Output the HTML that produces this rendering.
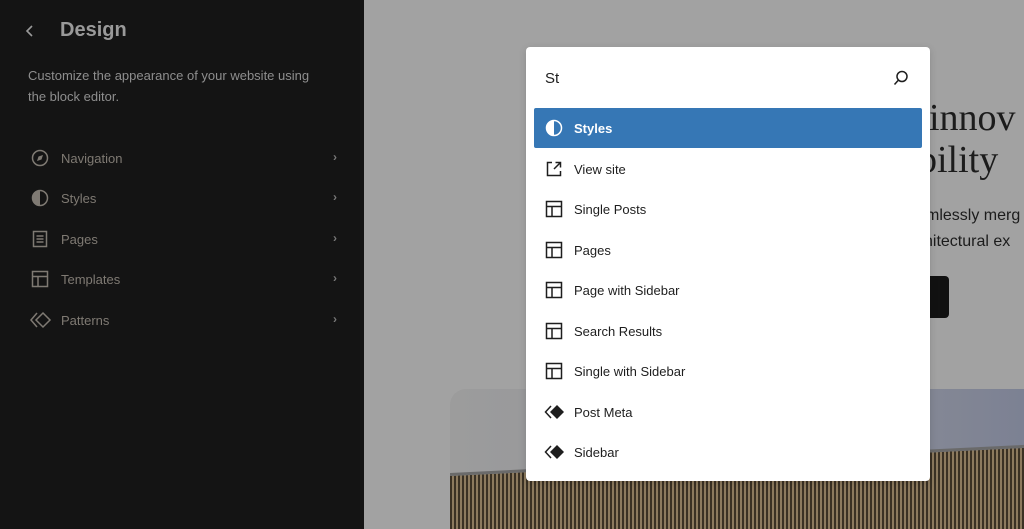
<!DOCTYPE html>
<html><head><meta charset="utf-8"><style>
*{margin:0;padding:0;box-sizing:border-box}
html,body{width:1024px;height:529px;overflow:hidden}
body{background:#a2a2a2;font-family:"Liberation Sans",sans-serif;position:relative}
#side{position:absolute;left:0;top:0;width:364px;height:529px;background:#141414;color:#8a8a8a}
.t{position:absolute;font-size:20px;font-weight:bold;color:#9a9a9a;left:60px;top:19px}
.desc{position:absolute;left:28px;top:66px;font-size:13px;line-height:20.5px;color:#8e8e8e;width:302px}
.nav{position:absolute;left:30px;width:310px;height:24px;font-size:13px;color:#7f7a73}
.nav svg{position:absolute;left:0;top:2px}
.nav span{position:absolute;left:31px;top:5px}
.nav .ch{position:absolute;right:3px;top:4px;font-size:12px;color:#777}
.bg{position:absolute;font-family:"Liberation Serif",serif;color:#1c1c1c;white-space:nowrap}
#modal{position:absolute;left:526px;top:47px;width:404px;height:434px;background:#fff;border-radius:4px;box-shadow:0 2px 8px rgba(0,0,0,.15);z-index:2}
.row{position:absolute;left:8px;width:388px;height:40px;font-size:13px;color:#1e1e1e}
.row svg{position:absolute;left:10px;top:10px}
.row span{position:absolute;left:40px;top:13px}
.sel{background:#3677b5;color:#fff;border-radius:2px;font-weight:bold}
</style></head><body>
<div id="side">
<svg style="position:absolute;left:24px;top:23px" width="12" height="16" viewBox="0 0 12 16"><path d="M8 3 L3 8 L8 13" stroke="#9a9a9a" stroke-width="1.6" fill="none"/></svg>
<div class="t">Design</div>
<div class="desc">Customize the appearance of your website using the block editor.</div>
<div class="nav" style="top:146px"><svg width="20" height="20" viewBox="0 0 20 20"><circle cx="10" cy="10" r="7.5" stroke="#7f7a73" stroke-width="1.5" fill="none"/><path d="M7 13 L8.5 8.5 L13 7 L11.5 11.5Z" fill="#7f7a73"/></svg><span>Navigation</span><b class="ch">›</b></div>
<div class="nav" style="top:186px"><svg width="20" height="20" viewBox="0 0 20 20"><circle cx="10" cy="10" r="7.5" stroke="#7f7a73" stroke-width="1.5" fill="none"/><path d="M10 2.5 A7.5 7.5 0 0 0 10 17.5Z" fill="#7f7a73"/></svg><span>Styles</span><b class="ch">›</b></div>
<div class="nav" style="top:227px"><svg width="20" height="20" viewBox="0 0 20 20"><rect x="3.5" y="2.5" width="13" height="15" stroke="#7f7a73" stroke-width="1.5" fill="none"/><path d="M6.5 7h7M6.5 10h7M6.5 13h7" stroke="#7f7a73" stroke-width="1.4"/></svg><span>Pages</span><b class="ch">›</b></div>
<div class="nav" style="top:267px"><svg width="20" height="20" viewBox="0 0 20 20"><rect x="2.5" y="2.5" width="15" height="15" stroke="#7f7a73" stroke-width="1.5" fill="none"/><path d="M2.5 7.5h15M8 7.5v10" stroke="#7f7a73" stroke-width="1.5"/></svg><span>Templates</span><b class="ch">›</b></div>
<div class="nav" style="top:308px"><svg width="22" height="20" viewBox="0 0 22 20"><path d="M7 3 L1 10 L7 17" stroke="#7f7a73" stroke-width="1.5" fill="none"/><path d="M13 3 L20 10 L13 17 L6 10Z" stroke="#7f7a73" stroke-width="1.5" fill="none"/></svg><span>Patterns</span><b class="ch">›</b></div>
</div>

<div class="bg" style="left:929px;top:96px;font-size:38px">innov</div>
<div class="bg" style="left:918px;top:138px;font-size:38px">bility</div>
<div class="bg" style="left:926px;top:207px;font-size:16px;font-family:'Liberation Sans',sans-serif">mlessly merg</div>
<div class="bg" style="left:924px;top:233px;font-size:16px;font-family:'Liberation Sans',sans-serif">hitectural ex</div>
<div style="position:absolute;left:880px;top:276px;width:69px;height:42px;background:#111;border-radius:4px"></div>
<div style="position:absolute;left:450px;top:389px;width:574px;height:140px;border-top-left-radius:16px;overflow:hidden;background:linear-gradient(90deg,#9c9c9c,#8f9198 60%,#7c8193)">
<div style="position:absolute;left:0;top:84px;width:574px;height:90px;transform:skewY(-2.8deg);transform-origin:0 0;background:repeating-linear-gradient(90deg,#3a3124 0 2px,#8c7a5e 2px 4px);border-top:3px solid #6a6a6a"></div>
</div>

<div id="modal">
<div style="position:absolute;left:19px;top:23px;font-size:15px;color:#1e1e1e">St</div>
<svg style="position:absolute;left:366px;top:22px" width="18" height="18" viewBox="0 0 18 18"><circle cx="10" cy="7.5" r="5" stroke="#1e1e1e" stroke-width="1.5" fill="none"/><path d="M6.5 11 L2.5 15.5" stroke="#1e1e1e" stroke-width="1.5"/></svg>
<div class="row sel" style="top:61px"><svg width="20" height="20" viewBox="0 0 20 20"><circle cx="10" cy="10" r="7.5" stroke="#fff" stroke-width="1.5" fill="none"/><path d="M10 2.5 A7.5 7.5 0 0 0 10 17.5Z" fill="#fff"/></svg><span>Styles</span></div>
<div class="row" style="top:102px"><svg width="20" height="20" viewBox="0 0 20 20"><path d="M8 3.5H3.5v13h13V12" stroke="#1e1e1e" stroke-width="1.5" fill="none"/><path d="M10 10 L16.5 3.5M11.5 3.5h5v5" stroke="#1e1e1e" stroke-width="1.5" fill="none"/></svg><span>View site</span></div>
<div class="row" style="top:142px"><svg width="20" height="20" viewBox="0 0 20 20"><rect x="2.5" y="2.5" width="15" height="15" stroke="#1e1e1e" stroke-width="1.5" fill="none"/><path d="M2.5 7.5h15M8 7.5v10" stroke="#1e1e1e" stroke-width="1.5"/></svg><span>Single Posts</span></div>
<div class="row" style="top:183px"><svg width="20" height="20" viewBox="0 0 20 20"><rect x="2.5" y="2.5" width="15" height="15" stroke="#1e1e1e" stroke-width="1.5" fill="none"/><path d="M2.5 7.5h15M8 7.5v10" stroke="#1e1e1e" stroke-width="1.5"/></svg><span>Pages</span></div>
<div class="row" style="top:223px"><svg width="20" height="20" viewBox="0 0 20 20"><rect x="2.5" y="2.5" width="15" height="15" stroke="#1e1e1e" stroke-width="1.5" fill="none"/><path d="M2.5 7.5h15M8 7.5v10" stroke="#1e1e1e" stroke-width="1.5"/></svg><span>Page with Sidebar</span></div>
<div class="row" style="top:264px"><svg width="20" height="20" viewBox="0 0 20 20"><rect x="2.5" y="2.5" width="15" height="15" stroke="#1e1e1e" stroke-width="1.5" fill="none"/><path d="M2.5 7.5h15M8 7.5v10" stroke="#1e1e1e" stroke-width="1.5"/></svg><span>Search Results</span></div>
<div class="row" style="top:304px"><svg width="20" height="20" viewBox="0 0 20 20"><rect x="2.5" y="2.5" width="15" height="15" stroke="#1e1e1e" stroke-width="1.5" fill="none"/><path d="M2.5 7.5h15M8 7.5v10" stroke="#1e1e1e" stroke-width="1.5"/></svg><span>Single with Sidebar</span></div>
<div class="row" style="top:345px"><svg width="22" height="20" viewBox="0 0 22 20"><path d="M7 4 L1.5 10 L7 16" stroke="#1e1e1e" stroke-width="1.5" fill="none"/><path d="M13 3 L20 10 L13 17 L6 10Z" fill="#1e1e1e"/></svg><span>Post Meta</span></div>
<div class="row" style="top:385px"><svg width="22" height="20" viewBox="0 0 22 20"><path d="M7 4 L1.5 10 L7 16" stroke="#1e1e1e" stroke-width="1.5" fill="none"/><path d="M13 3 L20 10 L13 17 L6 10Z" fill="#1e1e1e"/></svg><span>Sidebar</span></div>
</div>
</body></html>
